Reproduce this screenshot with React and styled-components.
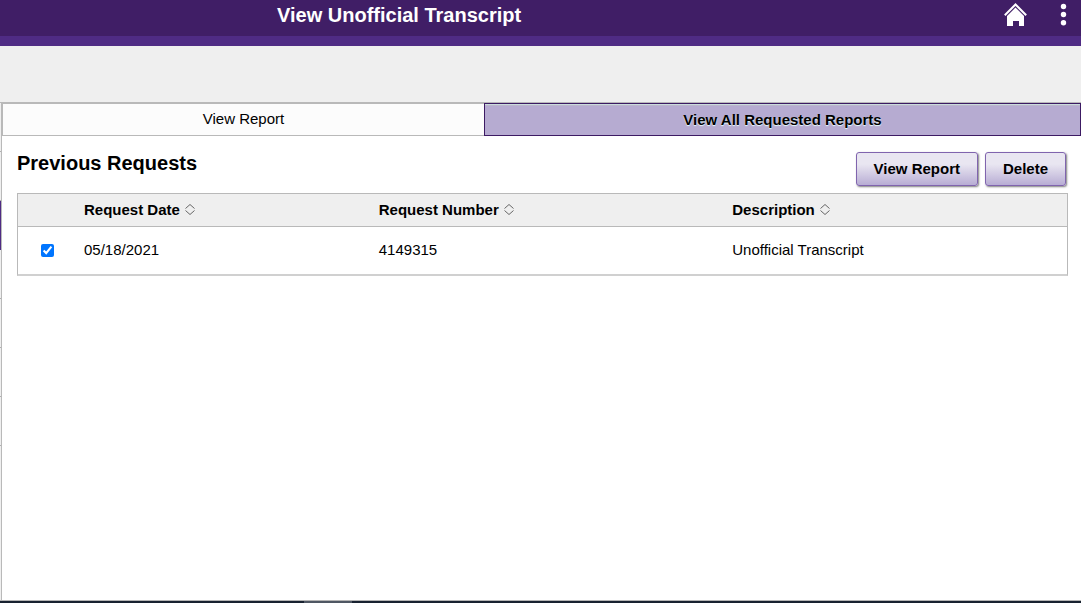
import React, { useState } from 'react';
import styled, { createGlobalStyle } from 'styled-components';

const GlobalStyle = createGlobalStyle`
  * {
    box-sizing: border-box;
  }

  body {
    margin: 0;
    background-color: #fff;
    color: #000;
    font-family: "Liberation Sans", Arial, sans-serif;
    font-size: 15px;
    line-height: 18px;
  }

  button, input {
    font: inherit;
    color: inherit;
  }
`;

const Page = styled.div`
  display: flex;
  flex-direction: column;
  min-height: 100vh;
`;

const Header = styled.header`
  display: flex;
  align-items: center;
  justify-content: space-between;
  height: 46px;
  padding: 0 11px 6px 277px;
  background: linear-gradient(#401e66 0, #401e66 36px, #4f2b84 36px);
`;

const PageTitle = styled.h1`
  margin: 0 0 10px;
  color: #fff;
  font-size: 20px;
  line-height: 24px;
`;

const HeaderActions = styled.div`
  display: flex;
  gap: 28px;
  padding-bottom: 10px;
`;

const IconButton = styled.button`
  display: flex;
  padding: 0;
  border: none;
  background: none;
  color: #fff;
  cursor: pointer;
`;

const SubHeader = styled.div`
  height: 57px;
  background-color: #efefef;
  border-bottom: 1px solid #b9b9b9;
`;

const Body = styled.div`
  display: flex;
  flex: 1;
`;

const SideRail = styled.nav`
  width: 2px;
  border-right: 1px solid #b9b9b9;
  background-color: #efefef;
`;

const RailItem = styled.div`
  height: 49px;
  border-bottom: 1px solid ${props => props.$selected ? '#4f2b84' : '#b0b0b0'};
  background-color: ${props => props.$selected ? '#4f2b84' : '#efefef'};
`;

const Content = styled.main`
  flex: 1;
  min-width: 0;
`;

const Tabs = styled.div`
  display: grid;
  grid-template-columns: 482fr 597fr;
`;

const Tab = styled.button`
  height: 33px;
  padding: 0 0 1px;
  border: 1px solid #b9b9b9;
  border-right: none;
  background-color: #fcfcfc;
  cursor: pointer;

  &[aria-selected='true'] {
    padding: 0;
    border: 1px solid #3c1a63;
    background-color: #b6abd1;
    box-shadow: inset 0 1px 0 #cbdbdc, inset 0 2px 0 #b9b5cb;
    font-weight: bold;
    text-shadow: 0 1px 1px #e8ffff;
  }
`;

const Panel = styled.section`
  padding: 16px 13px 16px 15px;
`;

const PanelHeader = styled.div`
  display: flex;
  justify-content: space-between;
  margin-bottom: 7px;
`;

const PanelTitle = styled.h2`
  margin: 0;
  font-size: 20px;
  line-height: 22px;
`;

const ButtonGroup = styled.div`
  display: flex;
  gap: 7px;
  padding-right: 2px;
`;

const ActionButton = styled.button`
  height: 34px;
  padding: 0 17px;
  border: 1px solid #8064ae;
  border-radius: 3px;
  background: linear-gradient(#e9e6f1 0%, #e9e6f1 35%, #b8add4 100%);
  box-shadow: 1px 1px 2px rgba(0, 0, 0, 0.5);
  font-weight: bold;
  cursor: pointer;
`;

const RequestTable = styled.table`
  width: 100%;
  table-layout: fixed;
  border: 1px solid #b9b9b9;
  border-bottom: 2px solid #d0d0d0;
  border-spacing: 0;

  th, td {
    padding: 0;
    text-align: left;
  }

  th {
    height: 33px;
    border-bottom: 1px solid #b9b9b9;
    background-color: #efefef;
  }

  td {
    height: 47px;
    padding-bottom: 2px;
  }
`;

const SelectColumn = styled.col`
  width: 66px;
`;

const DataColumn = styled.col`
  width: ${props => props.$width};
`;

const SortButton = styled.button`
  display: flex;
  align-items: center;
  gap: 5px;
  padding: 0;
  border: none;
  background: none;
  font-weight: bold;
  cursor: pointer;
`;

const RowCheckbox = styled.input`
  display: block;
  width: 13px;
  height: 13px;
  margin: 2px 0 0 23px;
  accent-color: #0075ff;
`;

const Taskbar = styled.footer`
  display: flex;
  height: 3px;
  padding-left: 304px;
  border-top: 1px solid #b5b5b5;
  background-color: #182230;
`;

const TaskbarItem = styled.div`
  width: 48px;
  background-color: #4f5763;
`;

const HomeIcon = () => (
  <svg width="24" height="24" viewBox="0 0 24 24" aria-hidden="true">
    <path d="M.8 12.200 11.500 1.500l10.700 10.700" fill="none" stroke="currentColor" strokeWidth="2" />
    <path d="M11.500 4.500 20 13v10h-5v-5h-6v5H3V13Z" fill="currentColor" />
  </svg>
);

const MoreIcon = () => (
  <svg width="14" height="24" viewBox="0 0 14 24" aria-hidden="true">
    <circle cx="7.500" cy="3.500" r="2.700" fill="currentColor" />
    <circle cx="7.500" cy="11.500" r="2.700" fill="currentColor" />
    <circle cx="7.500" cy="19.700" r="2.700" fill="currentColor" />
  </svg>
);

const SortIcon = () => (
  <svg width="10" height="12" viewBox="0 0 10 12" aria-hidden="true">
    <path d="M.5 4.500 5 .5 9.500 4.500M.5 6.500 5 10.500 9.500 6.500" fill="none" stroke="#666" />
  </svg>
);

const tabs = [
  { id: 'report', label: 'View Report' },
  { id: 'requested', label: 'View All Requested Reports' },
];

const columns = [
  { id: 'date', label: 'Request Date', width: '28.1%' },
  { id: 'number', label: 'Request Number', width: '33.7%' },
  { id: 'description', label: 'Description', width: 'auto' },
];

const requests = [
  { date: '05/18/2021', number: '4149315', description: 'Unofficial Transcript' },
];

const railItems = ['one', 'two', 'selected', 'four', 'five', 'six', 'seven'];

const App = () => {
  const [activeTab, setActiveTab] = useState('requested');
  const [checked, setChecked] = useState({ 4149315: true });

  const toggleRow = (number) => {
    setChecked({ ...checked, [number]: !checked[number] });
  };

  return (
    <Page>
      <GlobalStyle />
      <Header>
        <PageTitle>View Unofficial Transcript</PageTitle>
        <HeaderActions>
          <IconButton aria-label="Home"><HomeIcon /></IconButton>
          <IconButton aria-label="Actions"><MoreIcon /></IconButton>
        </HeaderActions>
      </Header>
      <SubHeader />

      <Body>
        <SideRail>
          {railItems.map(item => (
            <RailItem key={item} $selected={item === 'selected'} />
          ))}
        </SideRail>

        <Content>
          <Tabs role="tablist">
            {tabs.map(tab => (
              <Tab
                key={tab.id}
                role="tab"
                aria-selected={activeTab === tab.id}
                onClick={() => setActiveTab(tab.id)}
              >
                {tab.label}
              </Tab>
            ))}
          </Tabs>

          <Panel>
            <PanelHeader>
              <PanelTitle>Previous Requests</PanelTitle>
              <ButtonGroup>
                <ActionButton>View Report</ActionButton>
                <ActionButton>Delete</ActionButton>
              </ButtonGroup>
            </PanelHeader>

            <RequestTable>
              <colgroup>
                <SelectColumn />
                {columns.map(column => (
                  <DataColumn key={column.id} $width={column.width} />
                ))}
              </colgroup>
              <thead>
                <tr>
                  <th aria-label="Select" />
                  {columns.map(column => (
                    <th key={column.id}>
                      <SortButton>
                        {column.label}
                        <SortIcon />
                      </SortButton>
                    </th>
                  ))}
                </tr>
              </thead>
              <tbody>
                {requests.map(request => (
                  <tr key={request.number}>
                    <td>
                      <RowCheckbox
                        type="checkbox"
                        aria-label={`Select request ${request.number}`}
                        checked={!!checked[request.number]}
                        onChange={() => toggleRow(request.number)}
                      />
                    </td>
                    <td>{request.date}</td>
                    <td>{request.number}</td>
                    <td>{request.description}</td>
                  </tr>
                ))}
              </tbody>
            </RequestTable>
          </Panel>
        </Content>
      </Body>

      <Taskbar>
        <TaskbarItem />
      </Taskbar>
    </Page>
  );
};

export default App;
